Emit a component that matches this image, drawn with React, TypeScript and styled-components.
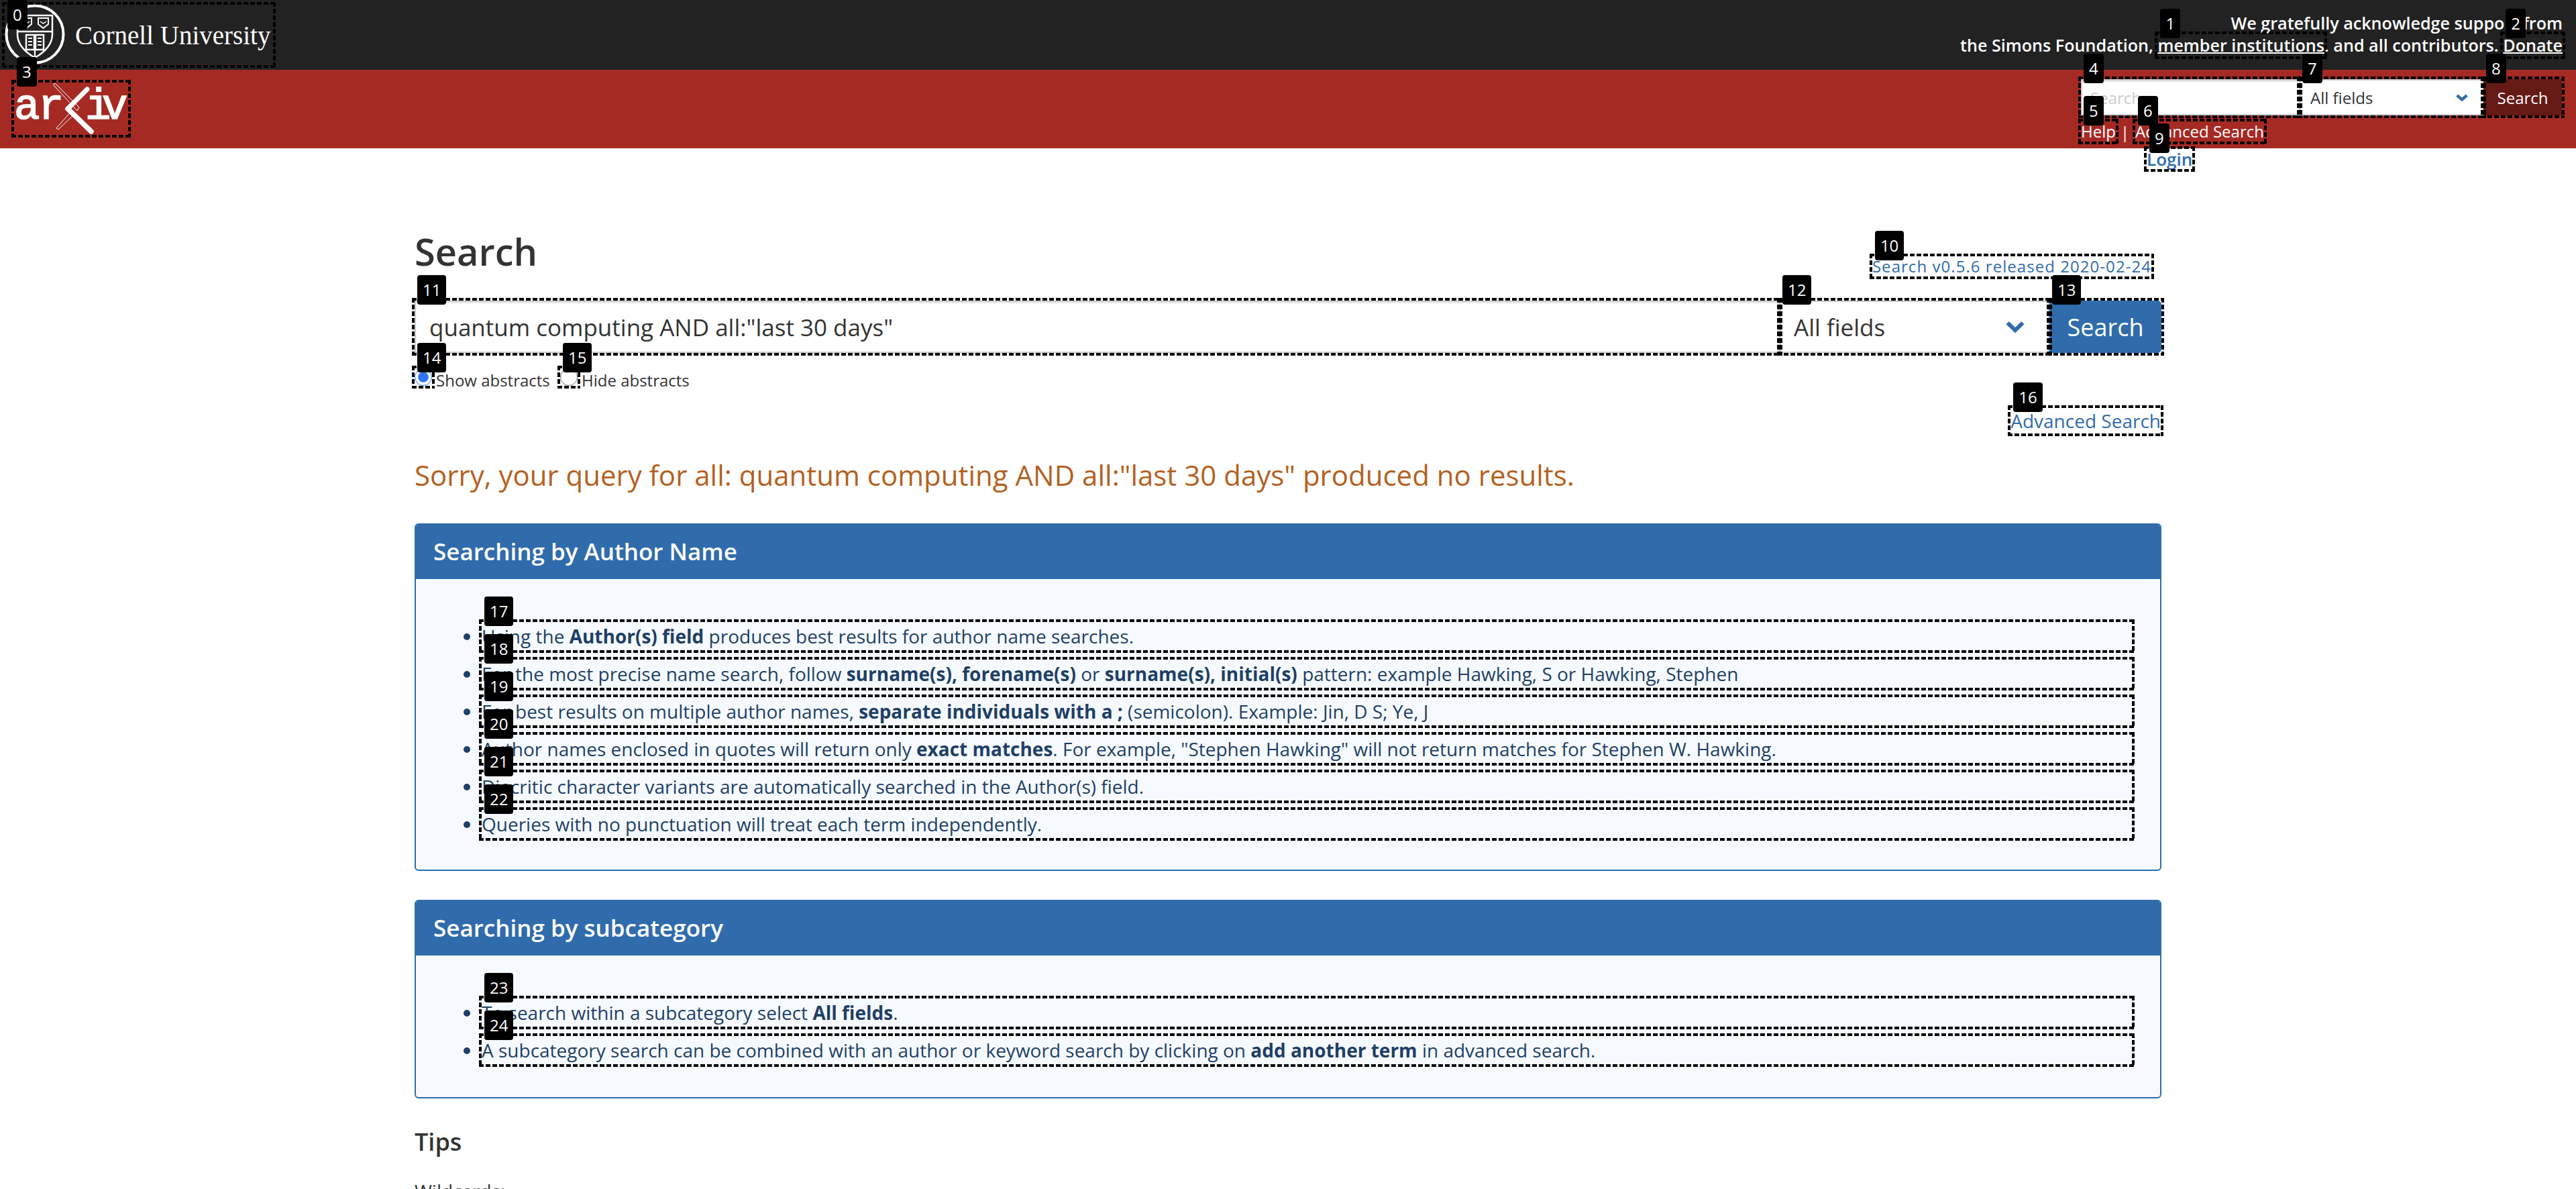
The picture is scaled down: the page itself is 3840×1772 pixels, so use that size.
import React from "react";
import styled, { createGlobalStyle } from "styled-components";

const Global = createGlobalStyle`
  html, body { margin: 0; padding: 0; height: 1772px; overflow: hidden; background: #fff; }
  body { font-family: "Open Sans", "Liberation Sans", sans-serif; color: #333; }
  #root { height: 1772px; overflow: hidden; }
  * { box-sizing: border-box; }
`;

const MarkBox = styled.span<{ $block?: boolean }>`
  position: relative;
  display: ${(p) => (p.$block ? "block" : "inline-block")};
  &::after {
    content: "";
    position: absolute;
    z-index: 4;
    inset: -4px;
    pointer-events: none;
    background:
      repeating-linear-gradient(90deg, #000 0 7px, transparent 7px 10px) left top / 100% 4px no-repeat,
      repeating-linear-gradient(90deg, #000 0 7px, transparent 7px 10px) left bottom / 100% 4px no-repeat,
      repeating-linear-gradient(180deg, #000 0 7px, transparent 7px 10px) left top / 4px 100% no-repeat,
      repeating-linear-gradient(180deg, #000 0 7px, transparent 7px 10px) right top / 4px 100% no-repeat;
  }
`;
const Badge = styled.span<{ $top: number }>`
  position: absolute;
  z-index: 5;
  left: 4px;
  top: ${(p) => p.$top}px;
  height: 44px;
  padding: 0 8px;
  display: flex;
  align-items: center;
  background: #000;
  color: #fff;
  border-radius: 4px;
  font: 400 24px/1 "Open Sans", sans-serif;
  text-decoration: none;
`;
const Mark = ({ n, block, top = -38, children }: { n: number; block?: boolean; top?: number; children: React.ReactNode }) => (
  <MarkBox $block={block}>
    {children}
    <Badge $top={top}>{n}</Badge>
  </MarkBox>
);

const TopBar = styled.header`
  height: 104px;
  background: #222;
  display: flex;
  justify-content: space-between;
  align-items: flex-start;
  padding: 7px 20px 0 7px;
`;
const CornellLogo = styled.a`
  display: flex;
  align-items: center;
  gap: 13px;
  width: 400px;
  height: 90px;
  color: #fff;
`;
const CornellName = styled.span`
  font: 400 39px/1 "Liberation Serif", serif;
  white-space: nowrap;
`;
const Support = styled.p`
  margin: 11px 0 0;
  text-align: right;
  color: #fff;
  font-size: 25.15px;
  font-weight: 600;
  line-height: 33px;
`;
const SupportLink = styled.a`
  color: #fff;
  text-decoration: underline;
  text-decoration-thickness: 2px;
`;

const RedBar = styled.div`
  height: 117px;
  background: #a52a24;
  display: flex;
  justify-content: space-between;
  align-items: flex-start;
  padding: 14px 21px 0 21px;
`;
const LogoMark = styled.div`
  margin-top: 5px;
`;
const ArxivWord = styled.text`
  font-family: "Liberation Mono", monospace;
  font-weight: 400;
  font-size: 64px;
  fill: #fff;
  stroke: #fff;
  stroke-width: 1.6px;
`;
const SearchCluster = styled.div`
  display: flex;
  flex-direction: column;
  width: 717px;
`;
const MiniForm = styled.div`
  display: flex;
  height: 54px;
`;
const MiniInput = styled.input`
  display: block;
  width: 326px;
  height: 54px;
  border: 2px solid #ccc;
  border-right-width: 1px;
  padding: 0 12px;
  font: 400 24px "Open Sans", sans-serif;
  box-shadow: inset 0 2px 2px rgba(0, 0, 0, 0.1);
  &::placeholder { color: #ccc; }
`;
const SelectBox = styled.span<{ $w: number; $h: number; $size: number; $pad: number }>`
  display: flex;
  align-items: center;
  justify-content: space-between;
  width: ${(p) => p.$w}px;
  height: ${(p) => p.$h}px;
  background: #fff;
  border: 2px solid #ccc;
  padding: 0 ${(p) => p.$pad}px 0 ${(p) => (p.$size > 30 ? 19 : 14)}px;
  font-size: ${(p) => p.$size}px;
  color: #333;
`;
const MiniButton = styled.button`
  display: block;
  width: 117px;
  height: 54px;
  border: 0;
  background: #651a16;
  color: #fff;
  font: 400 24px "Open Sans", sans-serif;
`;
const HelpRow = styled.div`
  display: flex;
  align-items: center;
  margin-top: 8px;
  height: 32px;
  color: #fff;
  font-size: 24px;
`;
const HelpLink = styled.a`
  color: #fff;
  display: block;
  line-height: 30px;
`;
const Pipe = styled.span`
  margin: 0 9px 0 7px;
`;
const LoginRow = styled.div`
  margin: 10px 0 0 98px;
  height: 30px;
`;
const LoginLink = styled.a`
  display: block;
  color: #306cac;
  font-size: 26px;
  font-weight: 600;
  line-height: 30px;
`;

const Main = styled.main`
  width: 2604px;
  margin: 0 auto;
`;
const TitleRow = styled.div`
  display: flex;
  justify-content: space-between;
  align-items: flex-end;
  height: 227px;
  padding: 0 15px 36px 0;
`;
const Title = styled.h1`
  margin: 0;
  font-size: 56px;
  font-weight: 600;
  line-height: 76px;
  color: #333;
`;
const Version = styled.a`
  display: block;
  color: #306cac;
  font-size: 24px;
  line-height: 30px;
  letter-spacing: 1.05px;
`;
const SearchForm = styled.div`
  display: flex;
  height: 78px;
`;
const BigInput = styled.input`
  display: block;
  width: 2035px;
  height: 78px;
  border: 2px solid #ccc;
  padding: 0 20px;
  color: #333;
  font: 400 35px "Open Sans", sans-serif;
  box-shadow: inset 0 2px 2px rgba(0, 0, 0, 0.1);
`;
const BigButton = styled.button`
  display: block;
  width: 167px;
  height: 78px;
  border: 0;
  border-radius: 0 6px 6px 0;
  background: #306cac;
  color: #fff;
  font: 400 36px "Open Sans", sans-serif;
`;
const RadioRow = styled.div`
  display: flex;
  align-items: center;
  height: 26px;
  margin-top: 23px;
  font-size: 24px;
`;
const Radio = styled.input`
  display: block;
  width: 26px;
  height: 26px;
  margin: 0;
  accent-color: #2f74fa;
`;
const RadioLabel = styled.label<{ $w: number }>`
  margin-left: 6px;
  padding-top: 8px;
  width: ${(p) => p.$w}px;
  white-space: nowrap;
  color: #333;
`;
const AdvancedRow = styled.div`
  display: flex;
  justify-content: flex-end;
  margin-top: 33px;
  padding-right: 1px;
`;
const AdvancedLink = styled.a`
  display: block;
  color: #306cac;
  font-size: 28px;
  line-height: 38px;
`;
const Sorry = styled.p`
  margin: 34px 0 0;
  color: #b4611f;
  font-size: 42px;
  line-height: 56px;
`;
const Card = styled.section<{ $h: number; $top: number }>`
  height: ${(p) => p.$h}px;
  margin-top: ${(p) => p.$top}px;
  background: #f6faff;
  border: 2px solid #306cac;
  border-radius: 6px;
  overflow: hidden;
`;
const CardHeader = styled.h2`
  margin: -2px -2px 0;
  height: 83px;
  padding: 0 28px;
  display: flex;
  align-items: center;
  background: #306cac;
  color: #fff;
  font-size: 35px;
  font-weight: 600;
`;
const CardList = styled.ul`
  margin: 0;
  padding: 64px 42px 0 98px;
  list-style: disc;
  color: #1e3f66;
  font-size: 28px;
  line-height: 42px;
`;
const CardItem = styled.li`
  margin-bottom: 14px;
`;
const Tips = styled.h3`
  margin: 40px 0 0;
  font-size: 36px;
  font-weight: 600;
  line-height: 50px;
  color: #333;
`;
const Para = styled.p`
  margin: 28px 0 0;
  font-size: 28px;
  line-height: 40px;
  color: #333;
`;

const Chevron = ({ w, h, s }: { w: number; h: number; s: number }) => (
  <svg width={w} height={h} viewBox={`0 0 ${w} ${h}`} aria-hidden>
    <path
      d={`M${s * 0.6} ${s * 0.7}L${w / 2} ${h - s * 0.8}L${w - s * 0.6} ${s * 0.7}`}
      fill="none"
      stroke="#306cac"
      strokeWidth={s}
    />
  </svg>
);

const Seal = () => (
  <svg width="92" height="92" viewBox="7 7 92 92" aria-hidden style={{ flex: "none" }}>
    <g fill="none" stroke="#fff">
      <circle cx="52" cy="52" r="42.500" strokeWidth="4" />
      <path d="M26 24H78V52C78 68 66 79 52 87C38 79 26 68 26 52Z" strokeWidth="2.500" />
      <path d="M26 48H78" strokeWidth="2.500" />
      <path d="M32 28H47V37L39.500 43L32 37ZM57 28H72V37L64.500 43L57 37Z" strokeWidth="2" />
      <path d="M35 33L39.500 36L44 33M60 33L64.500 36L69 33" strokeWidth="1.500" />
      <path d="M39 53H51V75H39ZM53 53H65V75H53Z" strokeWidth="2.500" />
      <path d="M42 58H48M42 63H48M42 68H48M56 58H62M56 63H62M56 68H62M52 75V87" strokeWidth="2.200" />
    </g>
  </svg>
);

const ArxivLogo = () => (
  <svg width="170" height="78" viewBox="0 0 170 78" aria-hidden style={{ display: "block" }}>
    <ArxivWord x="0" y="54">a</ArxivWord>
    <ArxivWord x="36" y="54">r</ArxivWord>
    <ArxivWord x="106" y="54">i</ArxivWord>
    <ArxivWord x="131" y="54">v</ArxivWord>
    <path d="M109 10L80 39" stroke="#fff" strokeWidth="7" strokeLinecap="round" />
    <path d="M80 39L115 73" stroke="#fff" strokeWidth="7.500" strokeLinecap="round" />
    <path d="M59 3L61 1L97 37L94 42L59 4ZM92 45L66 70L63 68L86 42" fill="none" stroke="#fff" strokeWidth="1" />
  </svg>
);

const authorRows: React.ReactNode[] = [
  <>Using the <b>Author(s) field</b> produces best results for author name searches.</>,
  <>For the most precise name search, follow <b>surname(s), forename(s)</b> or <b>surname(s), initial(s)</b> pattern: example Hawking, S or Hawking, Stephen</>,
  <>For best results on multiple author names, <b>separate individuals with a ;</b> (semicolon). Example: Jin, D S; Ye, J</>,
  <>Author names enclosed in quotes will return only <b>exact matches</b>. For example, "Stephen Hawking" will not return matches for Stephen W. Hawking.</>,
  <>Diacritic character variants are automatically searched in the Author(s) field.</>,
  <>Queries with no punctuation will treat each term independently.</>,
];
const subcatRows: React.ReactNode[] = [
  <>To search within a subcategory select <b>All fields</b>.</>,
  <>A subcategory search can be combined with an author or keyword search by clicking on <b>add another term</b> in advanced search.</>,
];

export default function App() {
  return (
    <>
      <Global />
      <TopBar>
        <Mark n={0} top={-7}>
          <CornellLogo>
            <Seal />
            <CornellName>Cornell University</CornellName>
          </CornellLogo>
        </Mark>
        <Support>
          We gratefully acknowledge support from
          <br />
          the Simons Foundation,{" "}
          <Mark n={1}><SupportLink>member institutions</SupportLink></Mark>, and all contributors.{" "}
          <Mark n={2}><SupportLink>Donate</SupportLink></Mark>
        </Support>
      </TopBar>
      <RedBar>
        <LogoMark>
          <Mark n={3}><ArxivLogo /></Mark>
        </LogoMark>
        <SearchCluster>
          <MiniForm>
            <Mark n={4}><MiniInput placeholder="Search..." readOnly /></Mark>
            <Mark n={7}>
              <SelectBox $w={274} $h={54} $size={24} $pad={20}>
                All fields <Chevron w={20} h={13} s={4.5} />
              </SelectBox>
            </Mark>
            <Mark n={8}><MiniButton>Search</MiniButton></Mark>
          </MiniForm>
          <HelpRow>
            <Mark n={5}><HelpLink>Help</HelpLink></Mark>
            <Pipe>|</Pipe>
            <Mark n={6}><HelpLink>Advanced Search</HelpLink></Mark>
          </HelpRow>
          <LoginRow>
            <Mark n={9}><LoginLink>Login</LoginLink></Mark>
          </LoginRow>
        </SearchCluster>
      </RedBar>
      <Main>
        <TitleRow>
          <Title>Search</Title>
          <Mark n={10}><Version>Search v0.5.6 released 2020-02-24</Version></Mark>
        </TitleRow>
        <SearchForm>
          <Mark n={11}><BigInput defaultValue={'quantum computing AND all:"last 30 days"'} readOnly /></Mark>
          <Mark n={12}>
            <SelectBox $w={402} $h={78} $size={35} $pad={34}>
              All fields <Chevron w={30} h={20} s={6} />
            </SelectBox>
          </Mark>
          <Mark n={13}><BigButton>Search</BigButton></Mark>
        </SearchForm>
        <RadioRow>
          <Mark n={14}><Radio type="radio" name="abs" defaultChecked /></Mark>
          <RadioLabel $w={185}>Show abstracts</RadioLabel>
          <Mark n={15}><Radio type="radio" name="abs" /></Mark>
          <RadioLabel $w={160}>Hide abstracts</RadioLabel>
        </RadioRow>
        <AdvancedRow>
          <Mark n={16}><AdvancedLink>Advanced Search</AdvancedLink></Mark>
        </AdvancedRow>
        <Sorry>Sorry, your query for all: quantum computing AND all:"last 30 days" produced no results.</Sorry>
        <Card $h={518} $top={44}>
          <CardHeader>Searching by Author Name</CardHeader>
          <CardList>
            {authorRows.map((r, i) => (
              <CardItem key={i}><Mark n={17 + i} block>{r}</Mark></CardItem>
            ))}
          </CardList>
        </Card>
        <Card $h={296} $top={43}>
          <CardHeader>Searching by subcategory</CardHeader>
          <CardList>
            {subcatRows.map((r, i) => (
              <CardItem key={i}><Mark n={23 + i} block>{r}</Mark></CardItem>
            ))}
          </CardList>
        </Card>
        <Tips>Tips</Tips>
        <Para>Wildcards:</Para>
      </Main>
    </>
  );
}
